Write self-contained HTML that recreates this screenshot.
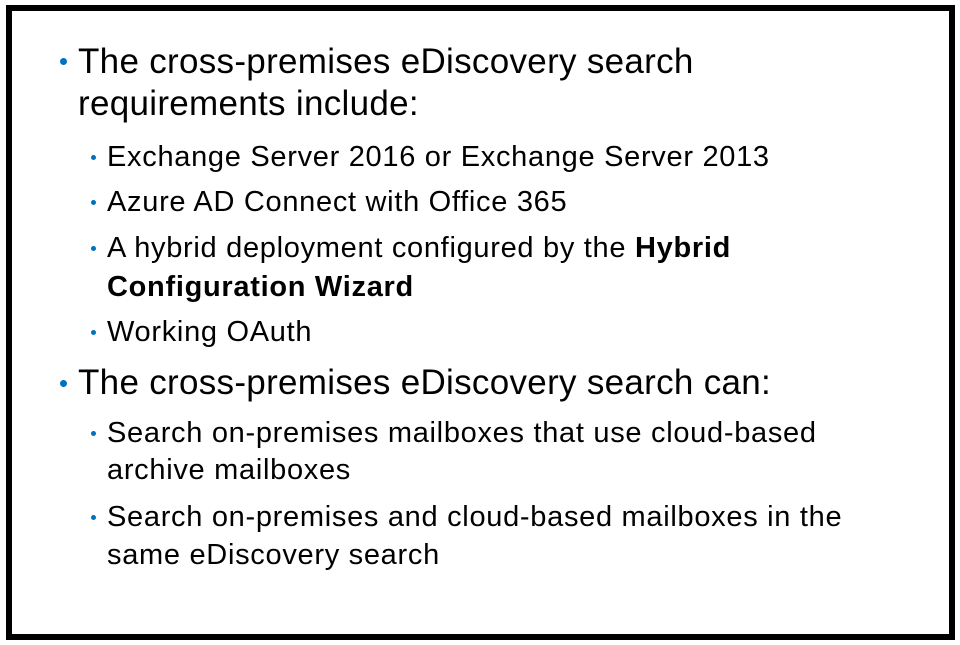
<!DOCTYPE html>
<html><head><style>
body{margin:0;width:960px;height:645px;background:#fff;position:relative;overflow:hidden;font-family:"Liberation Sans",sans-serif;color:#000}
.box{position:absolute;left:6px;top:5px;width:937px;height:623px;border:6px solid #000}
.l{position:absolute;white-space:nowrap;line-height:40px;height:40px}
.a{font-size:35px;left:78px;letter-spacing:0.3px}
.b{font-size:29px;left:107px;letter-spacing:0.7px}
.d{position:absolute;border-radius:50%;background:#0070c0}
</style></head><body>
<div class="box"></div>
<div class="d" style="left:60px;top:58px;width:7px;height:7px"></div>
<div class="l a" style="top:42px">The cross-premises eDiscovery search</div>
<div class="l a" style="top:84px">requirements include:</div>
<div class="d" style="left:91px;top:155px;width:5px;height:5px"></div>
<div class="l b" style="top:137px">Exchange Server 2016 or Exchange Server 2013</div>
<div class="d" style="left:91px;top:200px;width:5px;height:5px"></div>
<div class="l b" style="top:182px">Azure AD Connect with Office 365</div>
<div class="d" style="left:91px;top:246px;width:5px;height:5px"></div>
<div class="l b" style="top:228px">A hybrid deployment configured by the <b>Hybrid</b></div>
<div class="l b" style="top:267px"><b>Configuration Wizard</b></div>
<div class="d" style="left:91px;top:330px;width:5px;height:5px"></div>
<div class="l b" style="top:312px">Working OAuth</div>
<div class="d" style="left:60px;top:380px;width:7px;height:7px"></div>
<div class="l a" style="top:363px">The cross-premises eDiscovery search can:</div>
<div class="d" style="left:91px;top:431px;width:5px;height:5px"></div>
<div class="l b" style="top:413px">Search on-premises mailboxes that use cloud-based</div>
<div class="l b" style="top:450px">archive mailboxes</div>
<div class="d" style="left:91px;top:515px;width:5px;height:5px"></div>
<div class="l b" style="top:497px">Search on-premises and cloud-based mailboxes in the</div>
<div class="l b" style="top:535px">same eDiscovery search</div>
</body></html>
